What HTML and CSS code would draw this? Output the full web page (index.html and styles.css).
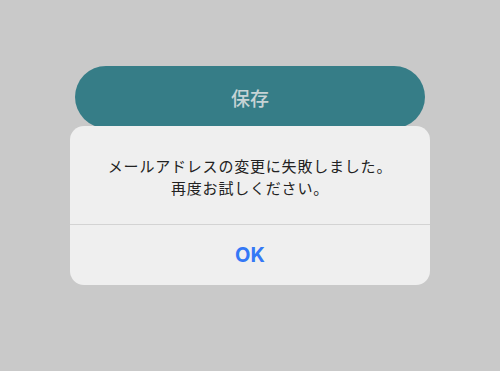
FILE: index.html
```html
<!DOCTYPE html>
<html lang="ja">
<head>
<meta charset="utf-8">
<link rel="stylesheet" href="styles.css">
</head>
<body>
<div class="screen">
  <button class="save">保存</button>
  <div class="alert">
    <div class="message">
      <div class="line">メールアドレスの変更に失敗しました。</div>
      <div class="line">再度お試しください。</div>
    </div>
    <div class="actions"><span class="ok">OK</span></div>
  </div>
</div>
</body>
</html>
```
FILE: styles.css
```css
html, body { margin: 0; padding: 0; }
body {
  width: 500px;
  height: 371px;
  background: #c9c9c9;
  font-family: "Noto Sans CJK JP", "Noto Sans", sans-serif;
  overflow: hidden;
}
.screen {
  position: relative;
  width: 500px;
  height: 371px;
  display: flex;
  flex-direction: column;
  align-items: center;
  padding-top: 66px;
  box-sizing: border-box;
}
.save {
  width: 350px;
  height: 62px;
  border: none;
  border-radius: 31px;
  background: #367d87;
  color: #c6d3d5;
  font-family: "Noto Sans CJK JP", sans-serif;
  font-size: 19px;
  font-weight: 500;
  padding: 0;
}
.alert {
  position: absolute;
  left: 70px;
  top: 126px;
  width: 360px;
  height: 159px;
  background: #efefef;
  border-radius: 14px;
  display: flex;
  flex-direction: column;
  overflow: hidden;
}
.message {
  height: 99px;
  box-sizing: border-box;
  padding-top: 29px;
  display: flex;
  flex-direction: column;
  align-items: center;
  color: #222;
  border-bottom: 1px solid #d3d3d3;
}
.line {
  font-size: 15px;
  line-height: 22px;
  height: 22px;
  letter-spacing: 0.8px;
}
.actions {
  flex: 1;
  display: flex;
  align-items: center;
  justify-content: center;
}
.ok {
  font-family: "Inter", "Noto Sans", sans-serif;
  font-weight: 700;
  font-size: 20px;
  color: #3478f6;
}
```
